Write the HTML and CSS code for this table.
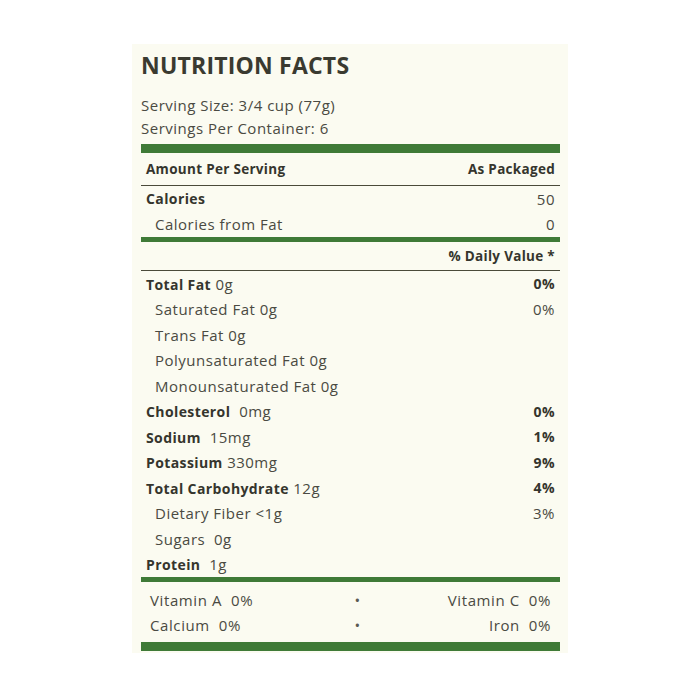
FILE: index.html
```html
<!DOCTYPE html>
<html>
<head>
<meta charset="utf-8">
<link rel="stylesheet" href="styles.css">
</head>
<body>
<div class="label">
  <h1 class="title">NUTRITION FACTS</h1>
  <div class="serving">
    <div>Serving Size: 3/4 cup (77g)</div>
    <div>Servings Per Container: 6</div>
  </div>
  <div class="bar thick"></div>
  <div class="head row">
    <span class="b">Amount Per Serving</span>
    <span class="b">As Packaged</span>
  </div>
  <div class="row"><span class="b">Calories</span><span>50</span></div>
  <div class="row sub"><span>Calories from Fat</span><span>0</span></div>
  <div class="bar mid"></div>
  <div class="head dv row"><span></span><span class="b">% Daily Value *</span></div>
  <div class="rows">
    <div class="row"><span><b>Total Fat</b> 0g</span><span class="b">0%</span></div>
    <div class="row sub"><span>Saturated Fat 0g</span><span>0%</span></div>
    <div class="row sub"><span>Trans Fat 0g</span><span></span></div>
    <div class="row sub"><span>Polyunsaturated Fat 0g</span><span></span></div>
    <div class="row sub"><span>Monounsaturated Fat 0g</span><span></span></div>
    <div class="row"><span><b>Cholesterol</b>&nbsp; 0mg</span><span class="b">0%</span></div>
    <div class="row"><span><b>Sodium</b>&nbsp; 15mg</span><span class="b">1%</span></div>
    <div class="row"><span><b>Potassium</b> 330mg</span><span class="b">9%</span></div>
    <div class="row"><span><b>Total Carbohydrate</b> 12g</span><span class="b">4%</span></div>
    <div class="row sub"><span>Dietary Fiber &lt;1g</span><span>3%</span></div>
    <div class="row sub"><span>Sugars&nbsp; 0g</span><span></span></div>
    <div class="row"><span><b>Protein</b>&nbsp; 1g</span><span></span></div>
  </div>
  <div class="bar mid"></div>
  <div class="vitamins">
    <div class="vrow"><span>Vitamin A&nbsp; 0%</span><span class="dot">•</span><span class="r">Vitamin C&nbsp; 0%</span></div>
    <div class="vrow"><span>Calcium&nbsp; 0%</span><span class="dot">•</span><span class="r">Iron&nbsp; 0%</span></div>
  </div>
  <div class="bar thick last"></div>
</div>
</body>
</html>
```
FILE: styles.css
```css
html, body {
  margin: 0;
  padding: 0;
  background: #ffffff;
}
body {
  font-family: "Open Sans", "Noto Sans", sans-serif;
  color: #3b3b33;
  font-size: 15px;
}
.label {
  width: 419px;
  margin: 44px auto 0;
  padding: 6px 8px 2px 9px;
  background: #fbfbf1;
}
.title {
  margin: 0 0 14px;
  font-size: 23px;
  line-height: 30px;
  font-weight: 700;
  color: #3a3a30;
  letter-spacing: 0.2px;
}
.serving {
  line-height: 23px;
  letter-spacing: 0.5px;
  color: #4a4a42;
}
.bar {
  background: #3f7a37;
}
.bar.thick {
  height: 9px;
  margin-top: 4px;
}
.bar.mid {
  height: 5px;
}
.bar.last {
  margin-top: 5px;
}
.row {
  display: flex;
  justify-content: space-between;
  align-items: center;
  height: 25.5px;
  padding: 0 5px;
  letter-spacing: 0.5px;
  color: #4a4a42;
}
.row b, .b {
  font-weight: 700;
  font-size: 14px;
  letter-spacing: 0.4px;
  color: #35352d;
}
.head {
  height: 32px;
  border-bottom: 1px solid #4a4a3a;
}
.head .b {
  font-size: 13.5px;
  letter-spacing: 0.3px;
}
.head.dv {
  height: 28px;
}
.sub {
  padding-left: 14px;
}
.vitamins {
  padding: 5px 9px 0;
}
.vrow {
  display: grid;
  grid-template-columns: 1fr auto 1fr;
  height: 25px;
  align-items: center;
  letter-spacing: 0.6px;
  color: #4a4a42;
}
.dot {
  font-size: 15px;
  margin-left: 14px;
  color: #5a5a52;
}
.r {
  text-align: right;
}
```
